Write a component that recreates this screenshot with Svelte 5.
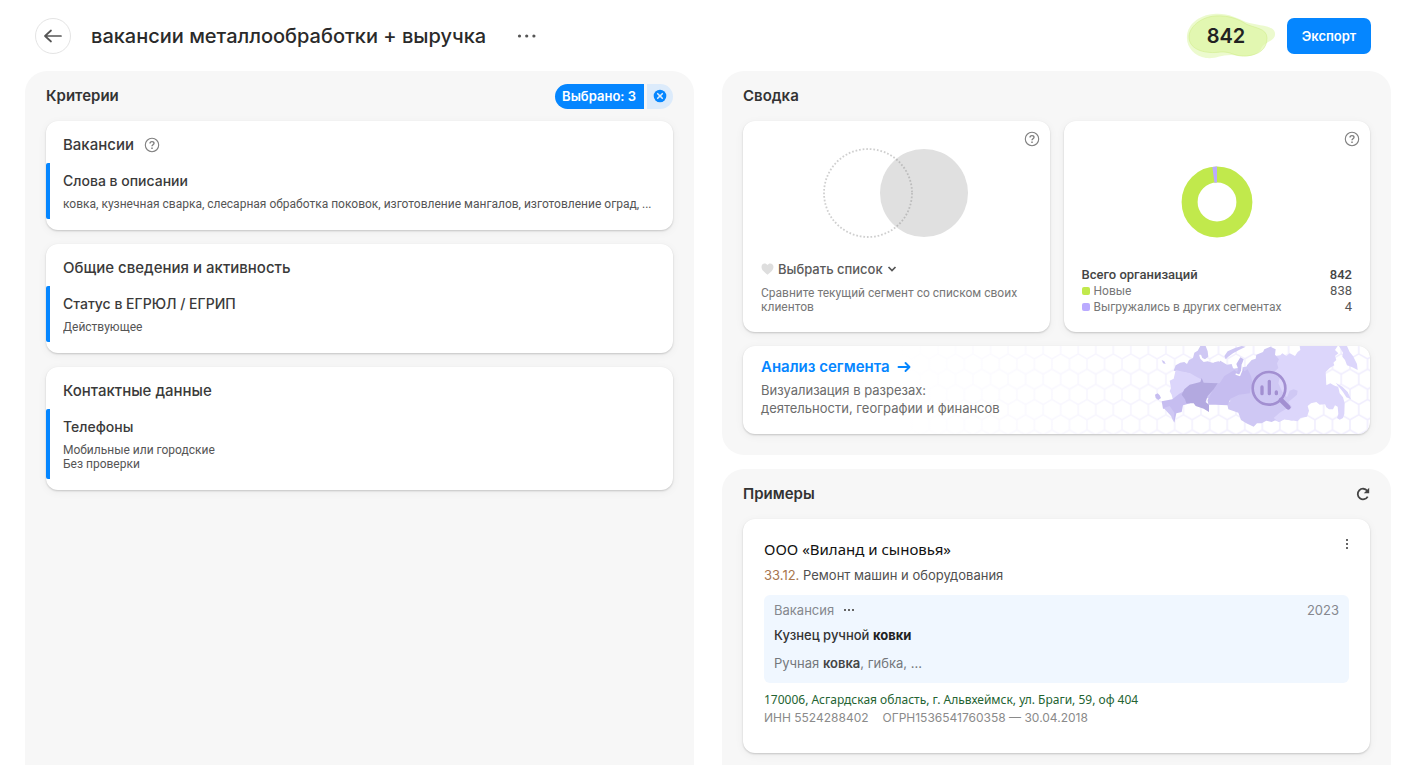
<script>
  const criteria = [
    {
      title: 'Вакансии',
      help: true,
      name: 'Слова в описании',
      lines: ['ковка, кузнечная сварка, слесарная обработка поковок, изготовление мангалов, изготовление оград, ...'],
    },
    { title: 'Общие сведения и активность', name: 'Статус в ЕГРЮЛ / ЕГРИП', lines: ['Действующее'] },
    { title: 'Контактные данные', name: 'Телефоны', lines: ['Мобильные или городские', 'Без проверки'] },
  ];

  const totals = [
    { label: 'Новые', value: 838, tone: 'lime' },
    { label: 'Выгружались в других сегментах', value: 4, tone: 'violet' },
  ];
</script>

{#snippet helpIcon()}
  <svg width="16" height="16" viewBox="0 0 16 16" fill="none" stroke="#808080" aria-hidden="true">
    <circle cx="8" cy="8" r="6.7" stroke-width="1.1" />
    <path d="M6 6.5C6 5.3 6.8 4.6 8 4.6s2 .7 2 1.7c0 1.5-2 1.5-2 3" stroke-width="1.4" />
    <path d="M8 10.5v1.5" stroke-width="1.5" />
  </svg>
{/snippet}

<div class="page">
  <header>
    <button class="back" aria-label="Назад">
      <svg width="20" height="20" viewBox="0 0 20 20" fill="none" stroke="#555" stroke-width="1.7" stroke-linecap="round" stroke-linejoin="round">
        <path d="M18 10H2M8 4.500 2 10l6 5.500" />
      </svg>
    </button>
    <h1>вакансии металлообработки + выручка</h1>
    <button class="plain more" aria-label="Ещё">
      <svg width="20" height="6" viewBox="0 0 20 6" fill="#555"><circle cx="2.5" cy="3" r="1.6" /><circle cx="9.7" cy="3" r="1.6" /><circle cx="16.9" cy="3" r="1.6" /></svg>
    </button>
    <div class="count">
      <svg width="90" height="48" viewBox="0 0 90 48" aria-hidden="true">
        <path d="M1 24C2 12 13 3 28 2C42 1 50 6 60 10C72 14 88 13 89 21C90 30 78 29 75 37C69 47 55 44 45 43C34 43 30 47 20 46C8 44 0 35 1 24Z" fill="#e0f7ae" fill-opacity=".6" />
        <path d="M3 25C3 15 15 5 29 4C44 3 54 8 60 12C68 16 81 16 81 26C81 37 73 43 60 44C49 45 45 39 34 40C22 42 3 39 3 25Z" fill="#dcf59f" fill-opacity=".6" stroke="#cdec83" stroke-opacity=".5" />
      </svg>
      <strong>842</strong>
    </div>
    <button class="export">Экспорт</button>
  </header>

  <main>
    <section class="panel criteria">
      <div class="head">
        <h2>Критерии</h2>
        <div class="selected">
          <span>Выбрано: 3</span>
          <button aria-label="Сбросить">
            <svg width="14" height="14" viewBox="0 0 14 14"><circle cx="7" cy="7" r="6.3" fill="#0586ff" /><path d="m4.7 4.7 4.6 4.6m0-4.6L4.7 9.3" stroke="#dcebfb" stroke-width="1.6" stroke-linecap="round" /></svg>
          </button>
        </div>
      </div>
      <div class="stack">
        {#each criteria as c}
          <article class="card criterion">
            <h3>{c.title}{#if c.help}<button class="plain" aria-label="Справка">{@render helpIcon()}</button>{/if}</h3>
            <div class="value">
              <h4>{c.name}</h4>
              {#each c.lines as line}<p>{line}</p>{/each}
            </div>
          </article>
        {/each}
      </div>
    </section>

    <div class="side">
      <section class="panel">
        <div class="head"><h2>Сводка</h2></div>
        <div class="pair">
          <article class="card tile">
            <button class="plain help" aria-label="Справка">{@render helpIcon()}</button>
            <svg class="venn" width="148" height="92" viewBox="0 0 148 92" aria-hidden="true">
              <circle cx="102" cy="46" r="44" fill="#e0e0e0" />
              <circle cx="46" cy="46" r="44" fill="none" stroke="#888" stroke-opacity=".4" stroke-width="1.8" stroke-dasharray="1.7 1.9" />
            </svg>
            <button class="plain choose">
              <svg width="13" height="12" viewBox="0 0 13 12" fill="#dedede"><path d="M6.5 11.7C3 9 .5 6.8.5 3.9C.5 1.7 2 .4 3.7.4c1.2 0 2.2.6 2.8 1.6C7.1 1 8.1.4 9.3.4c1.7 0 3.2 1.3 3.2 3.5 0 2.9-2.5 5.1-6 7.8Z" /></svg>
              Выбрать список
              <svg width="10" height="8" viewBox="0 0 10 8" fill="none" stroke="#555" stroke-width="1.7"><path d="m1.500 2 3.500 3.500L8.500 2" /></svg>
            </button>
            <p>Сравните текущий сегмент со списком своих клиентов</p>
          </article>
          <article class="card tile">
            <button class="plain help" aria-label="Справка">{@render helpIcon()}</button>
            <svg class="donut" width="72" height="72" viewBox="0 0 72 72" fill="none" stroke-width="16" aria-hidden="true">
              <circle cx="36" cy="36" r="27.4" stroke="#c1e94c" />
              <path d="M32.4 8.84A27.4 27.4 0 0 1 36 8.6" stroke="#baaaff" />
            </svg>
            <table>
              <tbody>
                <tr class="total"><th scope="row">Всего организаций</th><td>842</td></tr>
                {#each totals as t}
                  <tr><th scope="row"><i class={t.tone}></i>{t.label}</th><td>{t.value}</td></tr>
                {/each}
              </tbody>
            </table>
          </article>
        </div>
        <article class="card banner">
          <svg class="map" width="471" height="88" viewBox="0 0 471 88" aria-hidden="true">
            <defs>
              <pattern id="hex" width="52.6" height="91.2" patternUnits="userSpaceOnUse" patternTransform="translate(24 148)">
                <path d="M0 0V30.4L26.3 45.6 52.6 30.4V0M26.3 45.6V76L0 91.2M26.3 76 52.6 91.2M0 0 26.3-15.2 52.6 0" fill="none" stroke="#f0edfe" stroke-width="4.500" />
              </pattern>
              <linearGradient id="fade"><stop offset="0" stop-color="#fff" /><stop offset=".8" stop-color="#fff" stop-opacity="0" /></linearGradient>
            </defs>
            <g transform="translate(180 -6) scale(.333333)">
              <rect x="-540" y="18" width="1420" height="270" fill="url(#hex)" />
              <rect x="-540" y="18" width="1420" height="270" fill="url(#fade)" />
              <path fill="#cfc8f4" d="M440 90 500 80 560 60 590 60 600 200 560 240 520 220 450 180 400 180 320 150 320 110Z" />
              <path fill="#dcd6fb" d="M588 48 604 46 610 40 622 48 632 40 648 48 656 36 664 30 662 18H776L768 30 778 40 768 48 772 60 763 68 766 76 752 84 740 96 742 136 754 130 764 136 778 142 782 160 792 172 797 190 796 222 792 234 782 239 774 234 778 222 776 200 768 196 762 208 750 208 742 202 738 192 722 194 712 186 696 190 686 198 690 212 684 230 664 234 656 244 616 238 600 246 560 230 580 90ZM780 18H804L812 36 822 48 834 72 836 90 820 82 804 76 798 60 790 50 792 38ZM770 128 790 140 806 156 816 178 802 172 792 156Z" />
              <path fill="#cfc8f4" d="M284 92 290 76 304 68 316 66 324 72 330 60 342 54 346 38 356 32 364 18H380L386 34 388 50 378 58 370 54 366 44 360 44 364 56 374 66 386 64 400 68 424 62 444 74 458 72 462 84 476 96 440 122 414 132 372 130 330 100ZM248 60 256 64 260 72 252 70ZM436 48 446 34 468 24 488 18 500 20 480 30 462 40 448 50 440 58ZM500 100 504 76 518 60 530 56 532 44 552 36 556 28 574 20 590 28 588 44 600 58 594 70 598 84 588 94 604 106 598 130 610 156 624 172 632 152 644 148 656 152 654 164 638 178 628 186 638 200 630 220 612 234 590 240 578 246 562 242 548 250 534 250 524 260 502 250 486 240 478 218 448 208 444 190 478 168 512 160Z" />
              <path fill="#dcd6fb" d="M290 90 316 96 334 100 348 108 366 118 366 128 336 138 312 158 306 170 282 180 278 164 272 154 276 144 272 122 284 116ZM584 234 602 218 622 206 640 204 658 220 640 242 616 238 600 246Z" />
              <path fill="#c6bdf0" d="M248 184 280 178 300 162 314 154 320 178 334 190 312 196 308 216 292 220 286 248 278 224 262 206 252 206ZM228 164 236 160 242 166 246 174 238 180 230 174ZM412 130 422 130 436 108 466 90 474 96 478 88 472 72 484 52 494 58 488 74 496 94 506 88 516 108 520 126 512 160 480 164 454 176 446 196 410 194 388 194 386 180Z" />
              <path fill="#cfc8f4" d="M254 204 272 198 286 218 284 246 276 228Z" />
              <path fill="#b3a9e0" d="M316 148 332 134 364 126 368 114 374 128 416 130 404 148 386 168 380 186 390 194 390 216 374 206 350 198 344 190 322 190 318 178 308 164Z" />
              <path d="M470 102 482 106 488 92 490 74" fill="none" stroke="#fff" stroke-width="4" />
              <path fill="#fff" d="M398 58 408 52 410 64 402 68ZM414 60 424 56 422 66Z" />
              <g fill="none" stroke="#a28fd1">
                <circle cx="570" cy="145" r="49" stroke-width="8" />
                <path d="m606 180 22 22" stroke-width="14" stroke-linecap="round" />
                <path d="M549 141v20M571 124v37M592 156v5" stroke-width="10" stroke-linecap="round" />
              </g>
            </g>
          </svg>
          <div class="about">
            <a href="#analysis">Анализ сегмента
              <svg width="14" height="12" viewBox="0 0 14 12" fill="none" stroke="#0586ff" stroke-width="1.9" stroke-linecap="round" stroke-linejoin="round"><path d="M1.500 6H12M8.500 2 12.500 6l-4 4" /></svg>
            </a>
            <p>Визуализация в разрезах:<br />деятельности, географии и финансов</p>
          </div>
        </article>
      </section>

      <section class="panel samples">
        <div class="head">
          <h2>Примеры</h2>
          <button class="plain" aria-label="Обновить">
            <svg width="14" height="14" viewBox="0 0 14 14"><path d="M11.7 9.6A5.3 5.3 0 1 1 11.2 3.7" fill="none" stroke="#444" stroke-width="1.8" /><path d="M13.200.8v5.400H7.800Z" fill="#444" /></svg>
          </button>
        </div>
        <article class="card company">
          <div class="row">
            <h3>ООО «Виланд и сыновья»</h3>
            <button class="plain" aria-label="Действия">
              <svg width="4" height="12" viewBox="0 0 4 12" fill="#666"><rect x="1" y="1" width="2" height="2" /><rect x="1" y="5" width="2" height="2" /><rect x="1" y="9" width="2" height="2" /></svg>
            </button>
          </div>
          <p class="kind"><span>33.12.</span> Ремонт машин и оборудования</p>
          <div class="vacancy">
            <div class="row muted">
              <span>Вакансия</span>
              <svg width="12" height="4" viewBox="0 0 12 4" fill="#666" aria-hidden="true"><rect x="1" y="1" width="2" height="2" /><rect x="5" y="1" width="2" height="2" /><rect x="9" y="1" width="2" height="2" /></svg>
              <time>2023</time>
            </div>
            <h4>Кузнец ручной <b>ковки</b></h4>
            <p>Ручная <b>ковка</b>, гибка, ...</p>
          </div>
          <address>170006, Асгардская область, г. Альвхеймск, ул. Браги, 59, оф 404</address>
          <p class="codes"><span>ИНН 5524288402</span><span>ОГРН1536541760358 — 30.04.2018</span></p>
        </article>
      </section>
    </div>
  </main>
</div>

<style>
  :global(body) { margin: 0; background: #fff; }
  .page {
    box-sizing: border-box;
    height: 100vh;
    overflow: hidden;
    display: flex;
    flex-direction: column;
    padding: 0 27px 0 25px;
    color: #2a2a2a;
    font-family: Inter, "Noto Sans", sans-serif;
  }
  h1, h2, h3, h4, p { margin: 0; font-weight: 500; }
  svg { display: block; flex: none; }
  button { font: inherit; cursor: pointer; border: 0; padding: 0; }
  .plain { background: none; display: inline-flex; align-items: center; }

  header { display: flex; align-items: center; height: 71px; padding: 0 20px 0 10px; flex: none; }
  .back {
    width: 36px; height: 36px; border-radius: 50%;
    display: grid; place-items: center;
    background: #fff; border: 1px solid #e4e4e4;
  }
  h1 { margin-left: 20px; font-size: 20px; line-height: 28px; }
  .more { margin-left: 31px; }
  .count { display: grid; place-items: center; margin-left: auto; }
  .count > * { grid-area: 1 / 1; }
  .count strong { font-size: 20px; font-weight: 600; padding-right: 10px; color: #222; }
  .export {
    margin-left: 11px; width: 84px; height: 36px; border-radius: 7px;
    background: #0586ff; color: #fff; font-size: 13px; font-weight: 600;
  }

  main { display: grid; grid-template-columns: 1fr 1fr; gap: 28px; flex: 1; min-height: 0; }
  .side { display: flex; flex-direction: column; gap: 14px; min-height: 0; }
  .panel { background: #f7f7f7; border-radius: 22px; padding: 0 21px 21px; min-width: 0; }
  .criteria, .samples { border-radius: 22px 22px 0 0; }
  .samples { flex: 1 0 auto; }
  .head { display: flex; align-items: center; justify-content: space-between; height: 50px; }
  h2 { font-size: 15px; line-height: 20px; font-weight: 600; color: #333; }
  .card {
    background: #fff; border-radius: 12px;
    box-shadow: 0 1px 2px rgba(0, 0, 0, .18), 0 2px 10px rgba(0, 0, 0, .05);
  }

  .selected { display: flex; gap: 3px; }
  .selected span {
    background: #0586ff; color: #fff; font-size: 13px; font-weight: 600;
    line-height: 25px; padding: 0 8px 0 7px; border-radius: 13px 0 0 13px;
  }
  .selected button { width: 26px; display: grid; place-items: center; background: #dcebfb; border-radius: 0 13px 13px 0; }

  .stack { display: flex; flex-direction: column; gap: 14px; }
  .criterion { padding: 14px 0 11px; }
  .criterion h3 { display: flex; align-items: center; gap: 10px; padding: 0 17px; font-size: 15px; line-height: 20px; color: #3a3a3a; }
  .value { margin-top: 8px; padding: 8px 13px; border-left: 4px solid #0586ff; border-radius: 2px; }
  .value h4 { font-size: 14px; line-height: 20px; margin-bottom: 6px; color: #3a3a3a; }
  .value p { font: 400 12px/14px Roboto, sans-serif; color: #555; white-space: nowrap; overflow: hidden; text-overflow: ellipsis; }

  .pair { display: grid; grid-template-columns: 1fr 1fr; gap: 14px; }
  .tile { position: relative; display: flex; flex-direction: column; min-height: 211px; box-sizing: border-box; padding: 0 18px 17px; }
  .help { position: absolute; top: 10px; right: 10px; }
  .venn { margin: 26px auto 0; }
  .choose { margin-top: 20px; font-size: 13px; line-height: 20px; font-weight: 500; color: #5a5a5a; gap: 4px; align-self: flex-start; }
  .tile p { margin-top: 7px; font: 400 12px/14px Roboto, sans-serif; color: #777; }
  .donut { margin: 45px auto 0; }
  table { margin-top: auto; border-collapse: collapse; font: 400 12px/16px Roboto, sans-serif; color: #777; }
  th, td { padding: 0; font-weight: 400; }
  th { text-align: left; }
  td { text-align: right; font-size: 13px; color: #555; }
  .total th, .total td { font-size: 13px; font-weight: 500; color: #444; }
  i { display: inline-block; width: 8px; height: 8px; border-radius: 2px; margin-right: 4px; }
  .lime { background: #c1e94c; }
  .violet { background: #baaaff; }

  .banner { display: grid; margin-top: 14px; min-height: 88px; overflow: hidden; }
  .banner > * { grid-area: 1 / 1; }
  .map { justify-self: end; }
  .about { padding: 11px 18px; }
  .about a { display: flex; align-items: center; gap: 7px; font-size: 15px; line-height: 20px; font-weight: 600; color: #0586ff; text-decoration: none; }
  .about p { margin-top: 4px; font-size: 13px; line-height: 18px; font-weight: 400; color: #6c6c6c; }

  .company { padding: 19px 21px 26px; }
  .row { display: flex; align-items: center; }
  .company h3 { flex: 1; font: 400 15px/22px "Noto Sans", sans-serif; color: #111; }
  .company .row > button { align-self: flex-start; }
  .kind { margin-top: 6px; font-size: 13px; line-height: 18px; font-weight: 400; color: #505050; }
  .kind span { color: #a8764e; }
  .vacancy { margin-top: 11px; padding: 5px 10px 10px; background: #f0f7ff; border-radius: 6px; }
  .muted { gap: 9px; font-size: 13px; line-height: 20px; color: #85888e; }
  .muted time { margin-left: auto; }
  .vacancy h4 { margin-top: 5px; font-size: 13px; line-height: 20px; color: #333; }
  .vacancy p { margin-top: 8px; font-size: 13px; line-height: 20px; font-weight: 400; color: #74777c; }
  .vacancy b { font-weight: 700; color: #222; }
  .vacancy p b { font-weight: 600; color: #444; }
  address { margin-top: 8px; font: 400 12px/18px "Noto Sans", sans-serif; color: #246332; }
  .codes { display: flex; gap: 14px; font-size: 12px; line-height: 18px; font-weight: 400; color: #8a8a8a; }
</style>
